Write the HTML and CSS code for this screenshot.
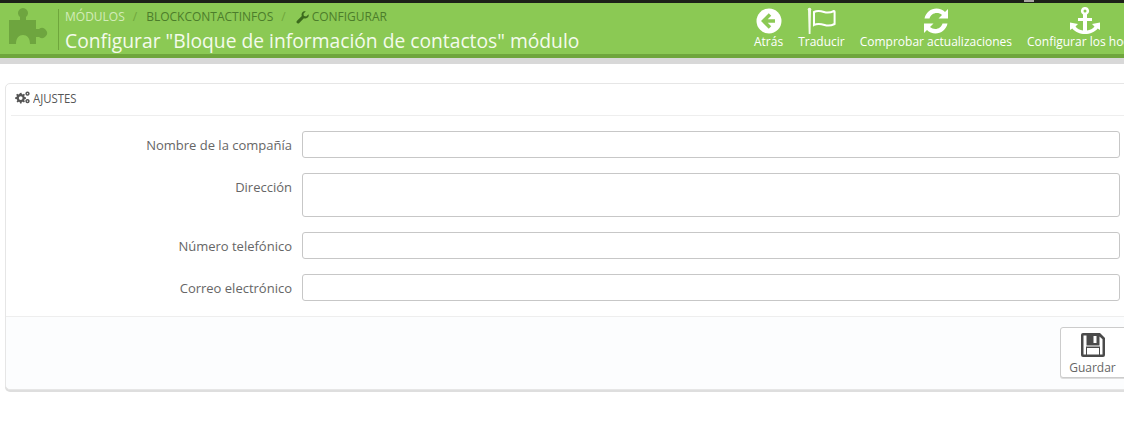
FILE: index.html
```html
<!DOCTYPE html>
<html lang="es">
<head>
<meta charset="utf-8">
<title>Configurar módulo</title>
<link rel="stylesheet" href="styles.css">
</head>
<body>
<div class="topline"><span class="topmark"></span></div>
<header class="head">
  <svg class="puzzle" viewBox="0 0 39 36" width="39" height="36"><path fill="#6ea53f" d="M0 12h11V9a5 5 0 1 1 6 0v3h10v9h3a5 5 0 1 1 0 8h-3v7h-6c0-6-3-9-7-9s-7 3-7 9H0z"/></svg>
  <div class="titles">
    <div class="crumbs"><span class="c1">MÓDULOS</span><span class="sep">/</span><span>BLOCKCONTACTINFOS</span><span class="sep">/</span><span class="cfg"><svg class="wrench" viewBox="0 0 14 14" width="13" height="13"><path fill="#3b6a1c" d="M13.6 3.4c.3 1.7-.2 3.1-1.500 4-1.100.7-2.400.8-3.600.3l-5 5.200c-.7.7-1.800.8-2.500.1s-.6-1.800.1-2.500l5.200-5c-.5-1.200-.4-2.500.3-3.600C7.500.6 9 .1 10.600.4L8 3l.5 2.500L11 6z"/></svg>CONFIGURAR</span></div>
    <h1 class="title">Configurar "Bloque de información de contactos" módulo</h1>
  </div>
  <nav class="tools">
    <a class="tool"><svg viewBox="0 0 26 27" width="26" height="27"><circle cx="13" cy="14" r="12.500" fill="#fff"/><path fill="none" stroke="#8bc954" stroke-width="3.500" d="M14 7.500L7.500 14l6.500 6.500M8 14h11"/></svg><span>Atrás</span></a>
    <a class="tool"><svg viewBox="0 0 30 27" width="30" height="27"><path fill="#f4fbec" d="M2 2.500h3L4.500 27H2.700z"/><circle cx="3.500" cy="2.500" r="1.800" fill="#f4fbec"/><path fill="none" stroke="#fff" stroke-width="2" d="M8 5c4-2 7-1 10 0s6 1 10-1c.5 0 .6.300.6.800V17c-4 2-7 2-10 1s-7-2-10.600 0z"/></svg><span>Traducir</span></a>
    <a class="tool"><svg viewBox="0 0 26 27" width="26" height="27"><path fill="#fff" d="M25 2v9.500h-9.500l3.500-3.500c-1.400-1.400-3.400-2-5.200-2-3.500 0-6.300 2.200-7.300 5.500H1.500C2.700 5.500 7.800 1.500 13.500 1.500c3.300 0 6.500 1.300 8.500 3.500zM1 26v-9.500h9.500L7 20c1.400 1.300 3.400 2 5.200 2 3.500 0 6.300-2.200 7.300-5.500h5C23.300 22.500 18.200 26.500 12.500 26.500c-3.300 0-6.500-1.300-8.500-3.500z"/></svg><span>Comprobar actualizaciones</span></a>
    <a class="tool"><svg viewBox="0 0 30 27" width="30" height="27"><path fill="#fff" fill-rule="evenodd" d="M15 0a4 4 0 0 1 2 7.500V11h5v3h-5v9.500c3-.3 6-1.700 7.500-4L22 17l8-1.500V23l-2.300-1.500C25 25 20 27 15 27S5 25 2.300 21.500L0 23v-7.500L8 17l-2.500 2.500c1.500 2.300 4.500 3.700 7.500 4V14H8v-3h5V7.500A4 4 0 0 1 15 0zm0 2.500a1.500 1.500 0 1 0 0 3 1.500 1.500 0 0 0 0-3z"/></svg><span>Configurar los hooks</span></a>
  </nav>
</header>
<div class="greybar"></div>
<main class="panel">
  <div class="panel-head"><svg class="cogs" viewBox="0 0 15 13" width="15" height="13"><path fill="#555" fill-rule="evenodd" d="M5 2l1.500-.2.300 1.300 1 .4 1.100-.7 1 1-.7 1.100.4 1 1.300.3V8l-1.300.3-.4 1 .7 1.100-1 1-1.100-.7-1 .4-.3 1.300H5l-.3-1.300-1-.4-1.100.7-1-1 .7-1.100-.4-1L.2 8V6.200l1.300-.3.4-1-.7-1.100 1-1 1.100.7 1-.4zm.7 3.200a1.900 1.900 0 1 0 0 3.800 1.900 1.900 0 0 0 0-3.800z"/><path fill="none" stroke="#555" stroke-width="1.500" d="M12.500 1.200a1.400 1.400 0 1 1-.01 0zM12.500 8.700a1.400 1.400 0 1 1-.01 0z"/></svg><span class="head-label">AJUSTES</span></div>
  <form class="form">
    <div class="row"><label>Nombre de la compañía</label><input class="field" type="text"></div>
    <div class="row"><label>Dirección</label><textarea class="field area"></textarea></div>
    <div class="row"><label>Número telefónico</label><input class="field" type="text"></div>
    <div class="row"><label>Correo electrónico</label><input class="field" type="text"></div>
  </form>
  <div class="panel-foot">
    <button class="save" type="button"><svg viewBox="0 0 24 24" width="24" height="24"><path fill="#4a4a4a" d="M2 0h17l5 5v17a2 2 0 0 1-2 2H2a2 2 0 0 1-2-2V2a2 2 0 0 1 2-2z"/><path fill="#fff" d="M2.500 2.500H5.500V12.500H18.500V3.500L21.500 6.300V21.500H19V13.500H5V21.500H2.500zM6 15H18V21.500H6zM12.500 3H15.500V10H12.500z"/></svg><span>Guardar</span></button>
  </div>
</main>
</body>
</html>
```
FILE: styles.css
```css
* { box-sizing: border-box; }
html, body { margin: 0; padding: 0; height: 423px; overflow: hidden; background: #fff; }
body { font-family: "Open Sans", "Noto Sans", sans-serif; color: #555; }

.topline { height: 3px; background: #1c2118; position: relative; }
.topmark { position: absolute; left: 1024px; top: 0; width: 10px; height: 2px; background: #a9a9a4; }
.head {
  height: 55px; background: #8bc954; border-bottom: 4px solid #6fa63c;
  display: flex; padding: 5px 0 0 9px; overflow: hidden;
}
.puzzle { flex: none; }
.titles { margin-left: 10px; padding-left: 6px; border-left: 1px solid #6fa63c; height: 41px; margin-top: 1px; flex: none; width: 696px; }
.crumbs { font-size: 12px; line-height: 14px; color: #4c7d2b; display: flex; align-items: center; white-space: nowrap; margin-top: 1px; }
.c1 { color: #d3ecb9; }
.sep { margin: 0 9px 0 8px; color: #6fa63c; }
.cfg { display: flex; align-items: center; gap: 3px; margin-left: 1px; }
.wrench { flex: none; }
.title { margin: 5px 0 0; font-size: 19.250px; line-height: 24px; font-weight: 400; color: #f4fbec; white-space: nowrap; }
.tools { display: flex; flex: none; gap: 15px; white-space: nowrap; margin-top: -1px; }
.tool { display: flex; flex-direction: column; align-items: center; color: #fff; font-size: 12px; line-height: 14px; }
.tool svg { display: block; margin-bottom: 1px; flex: none; }
.greybar { height: 6px; background: #d8d8d8; }

.panel {
  margin: 19px -20px 0 5px; height: 307px; background: #fff;
  border: 1px solid #e6e6e6; border-radius: 5px; box-shadow: 0 2px 0 #dedede;
  display: flex; flex-direction: column;
}
.panel-head {
  height: 32px; flex: none; margin: 0 0 0 5px; border-bottom: 1px solid #eee; display: flex; align-items: center;
  padding: 0 0 4px 4px; gap: 3px; font-size: 13.500px; color: #555;
}
.head-label { display: inline-block; transform: scaleX(.84); transform-origin: left center; }
.form { padding: 15px 0 0; flex: 1; }
.row { display: flex; align-items: flex-start; margin-bottom: 15px; }
.row label { width: 286px; height: 27px; padding-top: 1px; flex: none; text-align: right; font-size: 13px; line-height: 27px; color: #666; }
.field {
  display: block; margin: 0 0 0 10px; width: 818px; height: 27px; padding: 0 6px;
  border: 1px solid #c7c7c7; border-radius: 3px; background: #fff; resize: none; font: inherit; outline: 0;
}
.area { height: 44px; }
.panel-foot {
  height: 73px; flex: none; background: #fcfdfe; border-top: 1px solid #eee; border-radius: 0 0 5px 5px;
  padding: 10px 0 0 1054px;
}
.save {
  width: 70px; height: 51px; padding: 5px 5px 0 0; background: #fff; border: 1px solid #ccc; border-radius: 3px;
  display: flex; flex-direction: column; align-items: center; color: #666; font: inherit; font-size: 12px; gap: 3px;
  line-height: 15px; box-shadow: 0 1px 0 #ddd;
}
.save svg { flex: none; }
```
